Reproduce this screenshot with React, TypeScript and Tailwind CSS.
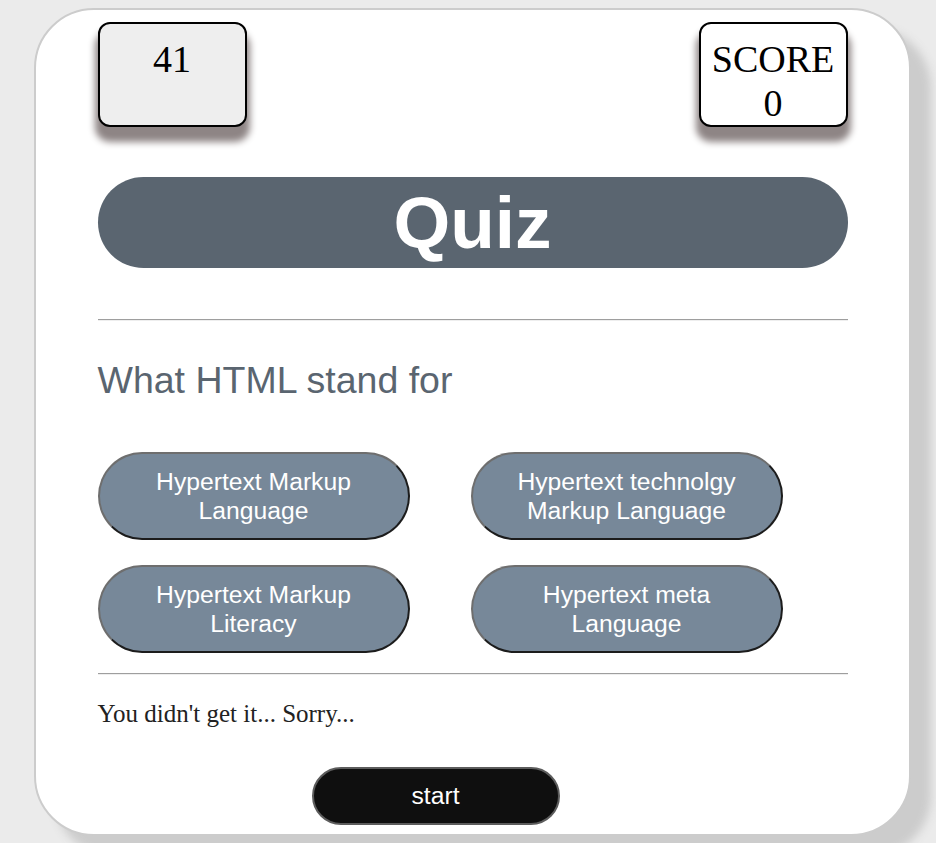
const answers = [
    ["Hypertext Markup", "Language"],
    ["Hypertext technolgy", "Markup Language"],
    ["Hypertext Markup", "Literacy"],
    ["Hypertext meta", "Language"],
];

function Divider() {
    return <div className="border-t border-b border-t-[#9e9e9e] border-b-[#eeeeee]" />;
}

function App() {
    return (
        <div className="min-h-[843px] bg-[#ebebeb] pt-[8px] overflow-hidden">
            <div className="ml-[34px] w-[877px] rounded-[60px] border-2 border-[#cccccc] bg-white pt-[12px] pb-[9px] shadow-[20px_20px_10px_#cccccc]">
                <div className="mx-auto w-[750px]">
                    <div className="flex justify-between font-['Liberation_Serif',serif] text-[38px] leading-[44px] text-black">
                        <div className="h-[105px] w-[149px] rounded-[12px] border-2 border-black bg-[#eeeeee] pt-[13px] text-center shadow-[0_12px_7px_3px_#8e8585]">
                            41
                        </div>
                        <div className="h-[105px] w-[149px] rounded-[12px] border-2 border-black bg-white pt-[13px] text-center shadow-[0_12px_7px_3px_#8e8585]">
                            SCORE
                            <br />0
                        </div>
                    </div>

                    <div className="mt-[50px] flex h-[91px] items-center justify-center rounded-full bg-[#5a6570]">
                        <h1 className="font-['Liberation_Sans',Arial,sans-serif] text-[73px] font-bold leading-none text-white">
                            Quiz
                        </h1>
                    </div>

                    <div className="mt-[51px]">
                        <Divider />
                    </div>

                    <h2 className="mt-[38px] font-['Liberation_Sans',Arial,sans-serif] text-[37.5px] leading-[42px] text-[#5a6570]">
                        What HTML stand for
                    </h2>

                    <div className="mt-[51px] grid w-[685px] grid-cols-2 gap-x-[61px] gap-y-[25px]">
                        {answers.map((a, i) => (
                            <button
                                key={i}
                                className="flex h-[88px] w-[312px] flex-col items-center justify-center rounded-full border-2 border-t-[#6e6e6e] border-l-[#6e6e6e] border-b-[#1c1c1c] border-r-[#1c1c1c] bg-[#778899] font-['Liberation_Sans',Arial,sans-serif] text-[24.7px] leading-[29px] text-white"
                            >
                                <span>{a[0]}</span>
                                <span>{a[1]}</span>
                            </button>
                        ))}
                    </div>

                    <div className="mt-[20px]">
                        <Divider />
                    </div>

                    <p className="mt-[25px] font-['Liberation_Serif',serif] text-[25px] leading-[28px] text-[#222222]">
                        You didn't get it... Sorry...
                    </p>

                    <button className="ml-[214px] mt-[39px] flex h-[58px] w-[248px] items-center justify-center rounded-full border-2 border-[#5c5c5c] bg-[#0f0f0f] font-['Liberation_Sans',Arial,sans-serif] text-[24.7px] text-white">
                        start
                    </button>
                </div>
            </div>
        </div>
    );
}

export default App;
